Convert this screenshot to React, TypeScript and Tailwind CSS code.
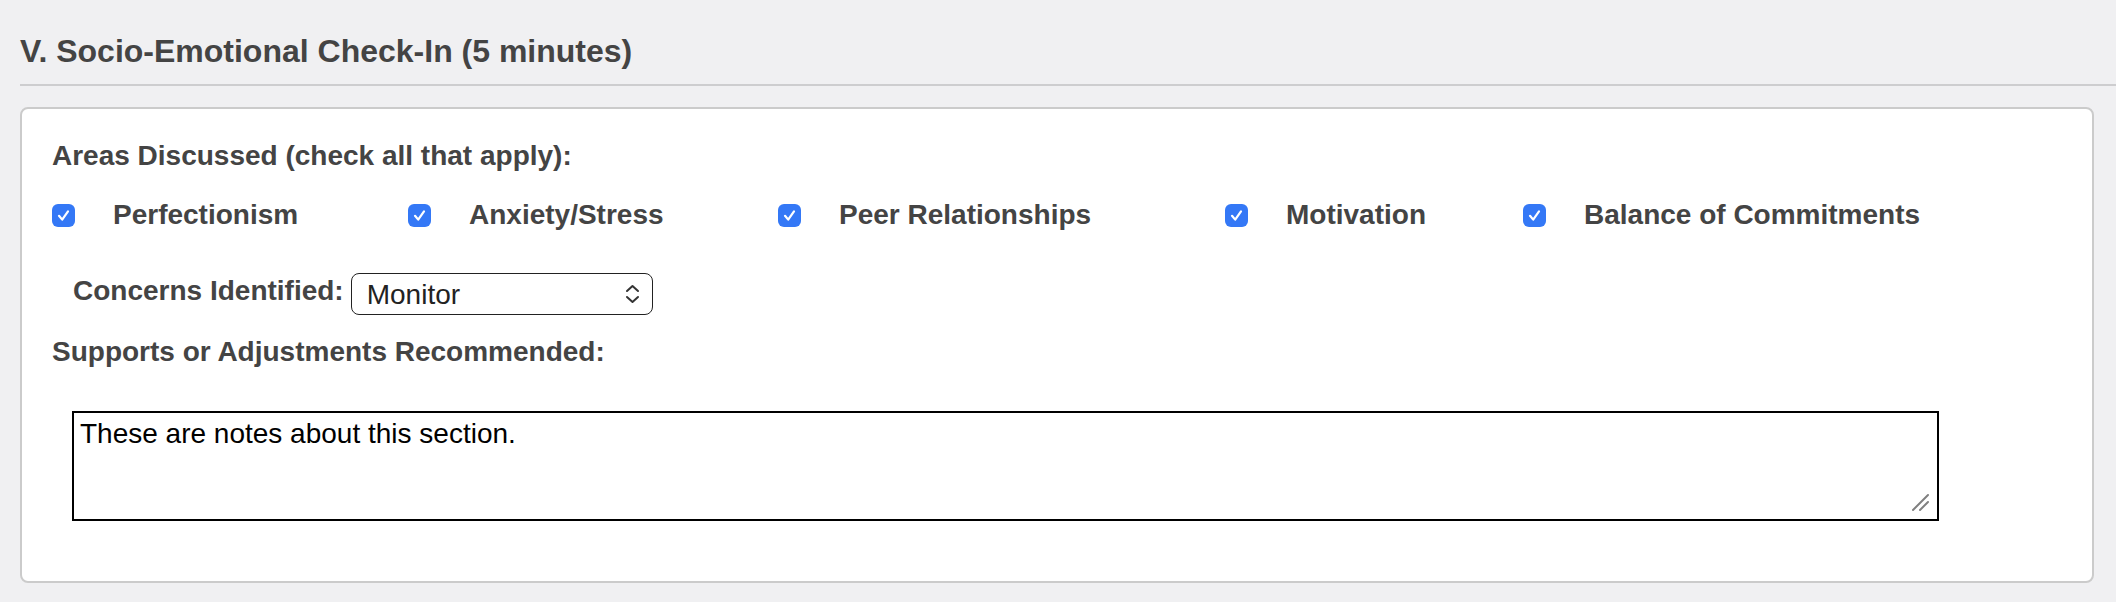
import { useState } from "react";

const areas = [
  { label: "Perfectionism", col: "w-[356px]" },
  { label: "Anxiety/Stress", col: "w-[370px]" },
  { label: "Peer Relationships", col: "w-[447px]" },
  { label: "Motivation", col: "w-[298px]" },
  { label: "Balance of Commitments", col: "" },
];

function CheckBox({ checked }: { checked: boolean }) {
  return (
    <span
      className={
        checked
          ? "flex h-[23px] w-[23px] shrink-0 items-center justify-center rounded-[6px] bg-[#3478f6]"
          : "flex h-[23px] w-[23px] shrink-0 items-center justify-center rounded-[6px] border border-[#999] bg-white"
      }
    >
      {checked && (
        <svg width="23" height="23" viewBox="0 0 23 23" fill="none">
          <path
            d="M7 11.8 L10.2 15.6 L16 7.4"
            stroke="white"
            strokeWidth="2.2"
            strokeLinecap="round"
            strokeLinejoin="round"
          />
        </svg>
      )}
    </span>
  );
}

export default function App() {
  const [checked, setChecked] = useState(areas.map(() => true));
  const [concern, setConcern] = useState("Monitor");

  return (
    <div className="h-[602px] w-full bg-[#f0f0f2] pl-[20px] font-['Liberation_Sans',Arial,sans-serif] text-[#444]">
      <h3 className="border-b-2 border-[#cdcdcf] pb-[13px] pt-[31px] text-[32px] font-bold leading-[40px]">
        V. Socio-Emotional Check-In (5 minutes)
      </h3>

      <div className="mr-[22px] mt-[21px] rounded-lg border-2 border-[#cbcbcb] bg-white pb-[60px] pl-[30px] pt-[31px]">
        <div className="text-[28px] font-bold leading-[32px]">Areas Discussed (check all that apply):</div>

        <div className="mt-[27px] flex">
          {areas.map((a, i) => (
            <label
              key={a.label}
              className={`flex cursor-pointer items-center ${a.col}`}
              onClick={() => setChecked(checked.map((c, j) => (j === i ? !c : c)))}
            >
              <CheckBox checked={checked[i]} />
              <span className="ml-[38px] text-[28px] font-bold leading-[32px]">{a.label}</span>
            </label>
          ))}
        </div>

        <div className="ml-[21px] mt-[42px] flex items-start gap-[7px]">
          <span className="mt-[2px] text-[28px] font-bold leading-[32px]">Concerns Identified:</span>
          <div className="relative">
            <select
              value={concern}
              onChange={(e) => setConcern(e.target.value)}
              className="h-[42px] w-[302px] appearance-none rounded-[8px] border-[1.5px] border-[#222] bg-white pl-[15px] text-[28px] text-[#222] outline-none"
            >
              <option>None</option>
              <option>Monitor</option>
              <option>Refer</option>
            </select>
            <svg
              className="pointer-events-none absolute right-[12px] top-[11px]"
              width="17"
              height="20"
              viewBox="0 0 17 20"
              fill="none"
            >
              <path d="M3 7 L8.5 2 L14 7" stroke="#333" strokeWidth="2" strokeLinecap="round" strokeLinejoin="round" />
              <path d="M3 13 L8.5 18 L14 13" stroke="#333" strokeWidth="2" strokeLinecap="round" strokeLinejoin="round" />
            </svg>
          </div>
        </div>

        <div className="mt-[21px] text-[28px] font-bold leading-[32px]">Supports or Adjustments Recommended:</div>

        <div className="relative ml-[20px] mt-[43px] w-[1867px]">
          <textarea
            defaultValue="These are notes about this section."
            className="block h-[110px] w-full resize-none border-2 border-black px-[6px] py-[5px] text-[28px] leading-[32px] text-black outline-none"
          />
          <svg
            className="pointer-events-none absolute bottom-[9px] right-[9px]"
            width="19"
            height="19"
            viewBox="0 0 19 19"
            fill="none"
          >
            <path d="M2 17 L17 2" stroke="#808080" strokeWidth="2" strokeLinecap="round" />
            <path d="M9 17 L17 9" stroke="#808080" strokeWidth="2" strokeLinecap="round" />
          </svg>
        </div>
      </div>
    </div>
  );
}
